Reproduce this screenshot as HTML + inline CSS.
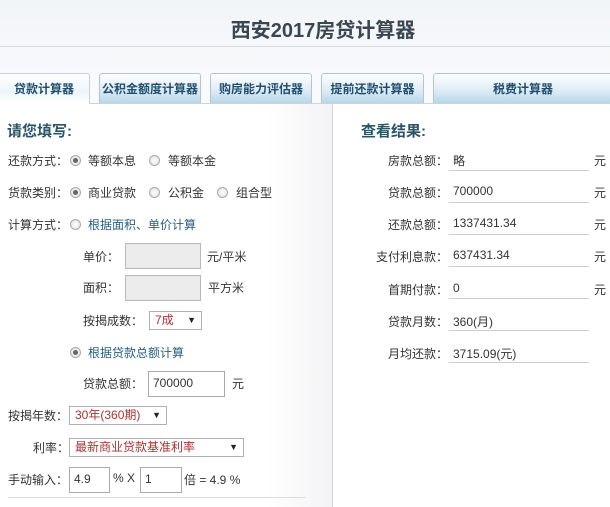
<!DOCTYPE html>
<html><head><meta charset="utf-8"><style>
*{margin:0;padding:0;box-sizing:border-box}
body{width:610px;height:507px;overflow:hidden;background:#fff;font-family:"Liberation Sans","Noto Sans CJK SC",sans-serif;font-size:12px;color:#333;position:relative}
.a{position:absolute;white-space:nowrap}
.top{position:absolute;left:0;top:0;width:610px;height:73px;background:linear-gradient(#f2f5f8,#f7f9fb)}
.tl{position:absolute;left:0;top:46px;width:610px;height:1px;background:#d5dbe0}
.title{left:0;width:646px;text-align:center;top:14px;font-size:20px;font-weight:bold;color:#3a4650}
.tabbar{position:absolute;left:0;top:73px;width:610px;height:31px;background:#f8fafb;border-bottom:1px solid #c9d5de}
.tab{position:absolute;top:0;height:30px;border:1px solid #b5c3cf;border-bottom:none;border-radius:3px 3px 0 0;background:linear-gradient(#fdfeff,#e3eef6 50%,#b8d8ec);text-align:center;line-height:30px;font-weight:bold;color:#1f4f6f;font-size:12px}
.tab.act{background:linear-gradient(#fff,#eef5f9 60%,#fff);height:31px;border-color:#c5d1da}
.left{position:absolute;left:0;top:104px;width:332px;height:403px;background:linear-gradient(90deg,#fff 80%,#f3f3f5)}
.vl{position:absolute;left:332px;top:104px;width:1px;height:403px;background:#d6d6d8}
.h{font-size:15px;font-weight:bold;color:#2b5566}
.r{width:11px;height:11px;border-radius:50%;border:1px solid #aaa;background:radial-gradient(#fff,#ddd)}
.r.on::after{content:"";position:absolute;left:2px;top:2px;width:5px;height:5px;border-radius:50%;background:#666}
.blue{color:#2a5f7d}
.in{position:absolute;border:1px solid #a9a9a9;background:#fff;padding-left:4px;font-size:12px;line-height:23px}
.gray{background:#ececec;border-color:#b8b8b8}
.sel{position:absolute;border:1px solid #b0b0b0;background:#fff;color:#a33;padding-left:5px;font-size:12px;line-height:17px}
.sel b{position:absolute;right:5px;top:0;color:#222;font-size:9px}
.lab{text-align:right;width:90px}
.ul{position:absolute;left:449px;width:140px;height:1px;background:#ccc}
</style></head><body>
<div class="top"></div><div class="tl"></div>
<div class="a title">西安2017房贷计算器</div>
<div class="tabbar">
<div class="tab act" style="left:-2px;width:92px">贷款计算器</div>
<div class="tab" style="left:99px;width:102px">公积金额度计算器</div>
<div class="tab" style="left:210px;width:102px">购房能力评估器</div>
<div class="tab" style="left:321px;width:103px">提前还款计算器</div>
<div class="tab" style="left:433px;width:180px">税费计算器</div>
</div>
<div class="left"></div><div class="vl"></div>
<div class="a h" style="left:7px;top:120px">请您填写:</div>
<div class="a h" style="left:361px;top:120px">查看结果:</div>

<div class="a" style="left:8px;top:152px">还款方式：</div>
<div class="a r on" style="left:70px;top:155px"></div><div class="a" style="left:88px;top:152px">等额本息</div>
<div class="a r" style="left:149px;top:155px"></div><div class="a" style="left:168px;top:152px">等额本金</div>

<div class="a" style="left:8px;top:184px">货款类别：</div>
<div class="a r on" style="left:70px;top:187px"></div><div class="a" style="left:88px;top:184px">商业贷款</div>
<div class="a r" style="left:149px;top:187px"></div><div class="a" style="left:168px;top:184px">公积金</div>
<div class="a r" style="left:217px;top:187px"></div><div class="a" style="left:236px;top:184px">组合型</div>

<div class="a" style="left:8px;top:216px">计算方式：</div>
<div class="a r" style="left:70px;top:219px"></div><div class="a blue" style="left:88px;top:216px">根据面积、单价计算</div>

<div class="a" style="left:83px;top:248px">单价：</div>
<div class="in gray" style="left:125px;top:243px;width:76px;height:26px"></div>
<div class="a" style="left:207px;top:248px">元/平米</div>
<div class="a" style="left:83px;top:279px">面积：</div>
<div class="in gray" style="left:125px;top:275px;width:76px;height:26px"></div>
<div class="a" style="left:208px;top:279px">平方米</div>
<div class="a" style="left:83px;top:312px">按揭成数：</div>
<div class="sel" style="left:149px;top:311px;width:53px;height:19px">7成<b>▼</b></div>

<div class="a r on" style="left:70px;top:347px"></div><div class="a blue" style="left:88px;top:344px">根据贷款总额计算</div>
<div class="a" style="left:83px;top:375px">贷款总额：</div>
<div class="in" style="left:148px;top:371px;width:77px;height:26px">700000</div>
<div class="a" style="left:232px;top:375px">元</div>

<div class="a" style="left:8px;top:407px">按揭年数：</div>
<div class="sel" style="left:69px;top:406px;width:98px;height:19px">30年(360期)<b>▼</b></div>
<div class="a" style="left:33px;top:439px">利率：</div>
<div class="sel" style="left:69px;top:438px;width:175px;height:19px">最新商业贷款基准利率<b>▼</b></div>
<div class="a" style="left:8px;top:471px">手动输入：</div>
<div class="in" style="left:69px;top:467px;width:41px;height:26px">4.9</div>
<div class="a" style="left:113px;top:471px">% X</div>
<div class="in" style="left:140px;top:467px;width:42px;height:26px">1</div>
<div class="a" style="left:184px;top:471px">倍 = 4.9 %</div>
<div class="a" style="left:8px;top:497px;width:298px;height:1px;background:#ddd"></div>

<div class="a lab" style="left:358px;top:152px">房款总额：</div><div class="a" style="left:453px;top:152px">略</div><div class="ul" style="top:170px"></div><div class="a" style="left:594px;top:152px">元</div>
<div class="a lab" style="left:358px;top:184px">贷款总额：</div><div class="a" style="left:453px;top:184px">700000</div><div class="ul" style="top:202px"></div><div class="a" style="left:594px;top:184px">元</div>
<div class="a lab" style="left:358px;top:216px">还款总额：</div><div class="a" style="left:453px;top:216px">1337431.34</div><div class="ul" style="top:234px"></div><div class="a" style="left:594px;top:216px">元</div>
<div class="a lab" style="left:358px;top:248px">支付利息款：</div><div class="a" style="left:453px;top:248px">637431.34</div><div class="ul" style="top:266px"></div><div class="a" style="left:594px;top:248px">元</div>
<div class="a lab" style="left:358px;top:281px">首期付款：</div><div class="a" style="left:453px;top:281px">0</div><div class="ul" style="top:298px"></div><div class="a" style="left:594px;top:281px">元</div>
<div class="a lab" style="left:358px;top:313px">贷款月数：</div><div class="a" style="left:453px;top:313px">360(月)</div><div class="ul" style="top:330px"></div>
<div class="a lab" style="left:358px;top:345px">月均还款：</div><div class="a" style="left:453px;top:345px">3715.09(元)</div><div class="ul" style="top:362px"></div>
</body></html>
